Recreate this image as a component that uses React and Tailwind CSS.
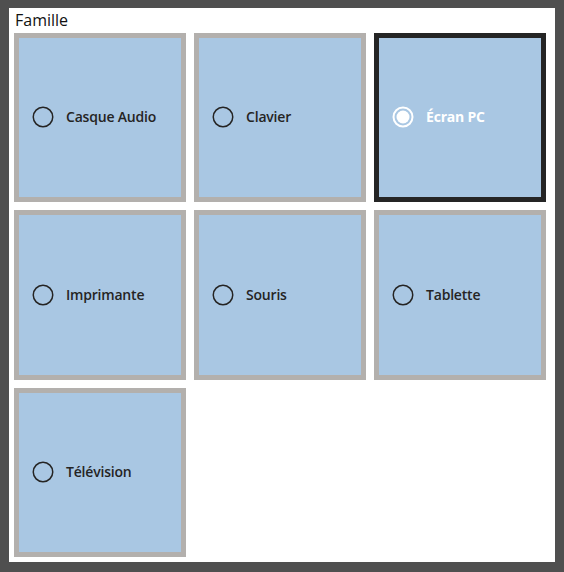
import React from "react";

const items = [
  { label: "Casque Audio" },
  { label: "Clavier" },
  { label: "Écran PC", selected: true },
  { label: "Imprimante" },
  { label: "Souris" },
  { label: "Tablette" },
  { label: "Télévision" },
];

function Radio({ selected }) {
  if (selected) {
    return (
      <svg width="22" height="22" viewBox="0 0 22 22" className="shrink-0">
        <circle cx="11" cy="11" r="9.5" fill="none" stroke="#ffffff" strokeWidth="2" />
        <circle cx="11" cy="11" r="6.5" fill="#ffffff" />
      </svg>
    );
  }
  return (
    <svg width="22" height="22" viewBox="0 0 22 22" className="shrink-0">
      <circle cx="11" cy="11" r="9.75" fill="none" stroke="#252423" strokeWidth="1.5" />
    </svg>
  );
}

export default function App() {
  return (
    <div className="w-[564px] h-[572px] bg-[#4f4f4f] pt-[8px] pl-[9px]">
      <div
        className="w-[546px] h-[554px] bg-white pl-[5px] pr-[9px] flex flex-col"
        style={{ fontFamily: '"Open Sans", "Noto Sans", sans-serif' }}
      >
        <div className="h-[25px] pt-[1px] pl-[1px] text-[16px] leading-[22px] text-[#111]">
          Famille
        </div>
        <div className="grid grid-cols-[172px_172px_172px] grid-rows-[169px_170px_169px] gap-[8px]">
          {items.map((it) => (
            <div
              key={it.label}
              className={
                "bg-[#a9c7e3] border-[5px] flex items-center pl-[13px] gap-[12px] pb-[1px] " +
                (it.selected ? "border-[#252525]" : "border-[#b3b0ad]")
              }
            >
              <Radio selected={it.selected} />
              <span
                className={
                  "text-[14px] leading-none tracking-[-0.2px] " +
                  (it.selected ? "text-white font-bold" : "text-[#252423] font-semibold")
                }
              >
                {it.label}
              </span>
            </div>
          ))}
        </div>
      </div>
    </div>
  );
}
